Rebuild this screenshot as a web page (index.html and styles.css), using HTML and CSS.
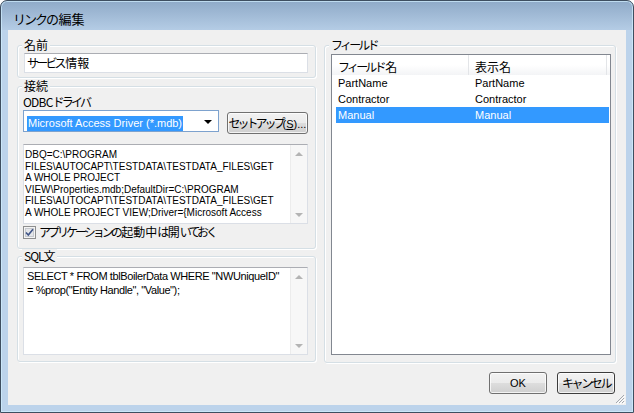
FILE: index.html
```html
<!DOCTYPE html>
<html lang="ja">

<head>
    <meta charset="UTF-8">
    <meta name="viewport" content="width=device-width, initial-scale=1.0">
    <title>リンクの編集</title>
    <link rel="stylesheet" href="styles.css">
</head>

<body>
    <div class="window">
        <div class="titlebar"><span class="kana title-kana">リンクの</span>編集</div>
        <div class="client">
            <div class="columns">
                <div class="col-left">
                    <div class="group group-name">
                        <span class="group-label">名前</span>
                        <div class="textbox name-box"><span class="kana">サービス</span>情報</div>
                    </div>

                    <div class="group group-conn">
                        <span class="group-label">接続</span>
                        <div class="field-label"><span class="abbr">ODBC</span><span class="kana">ドライバ</span></div>
                        <div class="driver-row">
                            <div class="combo">
                                <span class="combo-value latin">Microsoft Access Driver (*.mdb)</span>
                                <span class="combo-arrow"></span>
                            </div>
                            <button class="btn btn-setup"><span class="kana">セットアップ</span><span class="latin">(<u>S</u>)...</span></button>
                        </div>
                        <div class="memo conn-memo">
                            <div class="memo-text conn-text">DBQ=C:\PROGRAM<br>FILES\AUTOCAPT\TESTDATA\TESTDATA_FILES\GET<br>A WHOLE PROJECT<br>VIEW\Properties.mdb;DefaultDir=C:\PROGRAM<br>FILES\AUTOCAPT\TESTDATA\TESTDATA_FILES\GET<br>A WHOLE PROJECT VIEW;Driver={Microsoft Access</div>
                            <div class="vscroll">
                                <span class="arrow arrow-up"></span>
                                <span class="arrow arrow-down"></span>
                            </div>
                        </div>
                        <label class="check-row">
                            <span class="check-box">
                                <svg width="13" height="13" viewBox="0 0 13 13">
                                    <rect x="0.5" y="0.5" width="12" height="12" fill="#f4f4f4" stroke="#8e8f8f"/>
                                    <rect x="2.5" y="2.5" width="8" height="8" fill="#e4e6e9" stroke="#c6c9ce"/>
                                    <path d="M3 6.5 L5.3 9 L10 3.2" fill="none" stroke="#3f5487" stroke-width="1.6"/>
                                </svg>
                            </span>
                            <span class="check-text"><span class="kana">アプリケーションの</span>起動中<span class="kana">は</span>開<span class="kana">いておく</span></span>
                        </label>
                    </div>

                    <div class="group group-sql">
                        <span class="group-label label-sql">SQL文</span>
                        <div class="memo sql-memo">
                            <div class="memo-text sql-text latin">SELECT * FROM tblBoilerData WHERE "NWUniqueID"<br>= %prop("Entity Handle", "Value");</div>
                            <div class="vscroll">
                                <span class="arrow arrow-up"></span>
                                <span class="arrow arrow-down"></span>
                            </div>
                        </div>
                    </div>
                </div>

                <div class="col-right">
                    <div class="group group-fields">
                        <span class="group-label"><span class="kana">フィールド</span></span>
                        <div class="listview">
                            <div class="lv-header">
                                <div class="lv-head-cell lv-col1"><span class="kana">フィールド</span>名</div>
                                <div class="lv-head-cell lv-col2">表示名</div>
                            </div>
                            <div class="lv-rows latin">
                                <div class="lv-row">
                                    <span class="lv-cell lv-col1">PartName</span>
                                    <span class="lv-cell">PartName</span>
                                </div>
                                <div class="lv-row">
                                    <span class="lv-cell lv-col1">Contractor</span>
                                    <span class="lv-cell">Contractor</span>
                                </div>
                                <div class="lv-row selected">
                                    <span class="lv-cell lv-col1">Manual</span>
                                    <span class="lv-cell">Manual</span>
                                </div>
                            </div>
                        </div>
                    </div>
                </div>
            </div>

            <div class="footer">
                <button class="btn btn-dialog latin">OK</button>
                <button class="btn btn-dialog btn-default"><span class="kana">キャンセル</span></button>
            </div>

            <svg class="grip" width="11" height="11" viewBox="0 0 11 11">
                <path d="M10 2 L2 10 M10 5 L5 10 M10 8 L8 10" stroke="#a3a7ad" stroke-width="1"/>
                <path d="M11 3 L3 11 M11 6 L6 11 M11 9 L9 11" stroke="#ffffff" stroke-width="1"/>
            </svg>
        </div>
    </div>
</body>

</html>
```

FILE: styles.css
```css
body {
    margin: 0;
    padding: 0;
    font-family: "Noto Sans CJK JP", "Liberation Sans", sans-serif;
    font-size: 12px;
    color: #000;
    background-color: #ffffff;
}

/* the dialog font sets kana narrow, so kana runs are tightened */
.kana {
    letter-spacing: -2.8px;
    margin-right: 1.5px;
}

.latin {
    font-family: "Liberation Sans", sans-serif;
    font-size: 11px;
    letter-spacing: 0;
}

.window {
    width: 634px;
    height: 413px;
    box-sizing: border-box;
    border: 1px solid #3e4e60;
    border-radius: 7px 7px 0 0;
    background: linear-gradient(#8faac8 0, #b4cce5 29px, #bcd3eb 29px, #bcd3eb 100%);
    box-shadow: inset 0 0 0 1px rgba(210, 240, 255, 0.7);
    display: flex;
    flex-direction: column;
}

.titlebar {
    height: 29px;
    box-sizing: border-box;
    padding: 10px 0 0 12px;
    line-height: 16px;
    font-size: 13px;
    color: #000;
}

.title-kana {
    letter-spacing: -2px;
}

.client {
    flex: 1;
    margin: 0 7px 7px;
    background-color: #f0f0f0;
    display: flex;
    flex-direction: column;
    position: relative;
}

.columns {
    display: flex;
    gap: 8px;
    padding: 15px 10px 0 9px;
}

.col-left {
    width: 299px;
    display: flex;
    flex-direction: column;
}

.col-right {
    width: 292px;
}

/* group boxes */
.group {
    position: relative;
    box-sizing: border-box;
    border: 1px solid #d5dfe5;
    border-radius: 3px;
    box-shadow: inset 1px 1px 0 #fff, 1px 1px 0 #fff;
    padding-left: 5px;
}

.group-label {
    position: absolute;
    top: -8px;
    left: 4px;
    padding: 0 2px;
    line-height: 14px;
    background-color: #f0f0f0;
}

.label-sql {
    letter-spacing: -1px;
}

.group-name {
    height: 33px;
    padding-top: 7px;
}

.group-conn {
    height: 163px;
    margin-top: 8px;
}

.group-sql {
    height: 106px;
    margin-top: 7px;
    padding-top: 10px;
}

.group-fields {
    height: 318px;
    padding: 8px 4px 7px 6px;
    display: flex;
}

/* text inputs */
.textbox {
    box-sizing: border-box;
    height: 20px;
    background-color: #fff;
    border: 1px solid #dbdfe6;
    border-top-color: #abadb3;
    line-height: 18px;
    padding-left: 2px;
}

.name-box {
    width: 284px;
    margin-left: 1px;
}

.field-label {
    margin-top: 8px;
    line-height: 14px;
}

.abbr {
    letter-spacing: -0.8px;
}

.driver-row {
    display: flex;
    margin-top: 1px;
}

.combo {
    box-sizing: border-box;
    width: 196px;
    height: 22px;
    border: 1px solid #7da2ce;
    background-color: #fff;
    position: relative;
    padding: 2px 0 0 3px;
}

.combo-value {
    display: inline-block;
    height: 15px;
    line-height: 15px;
    padding: 0 1px;
    background-color: #3399ff;
    color: #fff;
}

.combo-arrow {
    position: absolute;
    top: 9px;
    right: 6px;
    border-left: 4px solid transparent;
    border-right: 4px solid transparent;
    border-top: 4px solid #000;
}

/* buttons */
.btn {
    box-sizing: border-box;
    height: 22px;
    border: 1px solid #707070;
    border-radius: 3px;
    background: linear-gradient(#f2f2f2 0%, #ebebeb 50%, #dddddd 51%, #cfcfcf 100%);
    box-shadow: inset 0 0 0 1px rgba(255, 255, 255, 0.75);
    font-family: inherit;
    font-size: 12px;
    color: #000;
    padding: 0;
    line-height: 18px;
    white-space: nowrap;
}

.btn.latin {
    font-family: "Liberation Sans", sans-serif;
    font-size: 11px;
}

.btn-setup {
    width: 81px;
    margin: 2px 0 0 8px;
}

.btn-setup .kana {
    letter-spacing: -3px;
    margin-right: 0;
}

.btn-dialog {
    width: 58px;
}

.btn-default {
    border-color: #3c3c3c;
}

.btn-default .kana {
    letter-spacing: -2.4px;
    margin-right: 0;
}

/* multi-line boxes */
.memo {
    box-sizing: border-box;
    width: 285px;
    display: flex;
    background-color: #fff;
    border: 1px solid #dbdfe6;
    border-top-color: #abadb3;
}

.memo-text {
    flex: 1;
    overflow: hidden;
    white-space: nowrap;
}

.conn-memo {
    height: 80px;
    margin-top: 10px;
}

.conn-text {
    padding: 4px 0 0 1px;
    font-family: "Liberation Sans", sans-serif;
    font-size: 10px;
    line-height: 11.6px;
}

.sql-memo {
    height: 88px;
}

.sql-text {
    padding: 1px 0 0 3px;
    line-height: 14px;
    letter-spacing: -0.4px;
}

.vscroll {
    width: 17px;
    flex-shrink: 0;
    background-color: #f7f7f7;
    border-left: 1px solid #ececec;
    display: flex;
    flex-direction: column;
    justify-content: space-between;
    align-items: center;
    padding: 7px 0 6px;
    box-sizing: border-box;
}

.arrow {
    width: 0;
    height: 0;
    border-left: 4px solid transparent;
    border-right: 4px solid transparent;
}

.arrow-up {
    border-bottom: 4px solid #b4b4b4;
}

.arrow-down {
    border-top: 4px solid #b4b4b4;
}

.check-row {
    display: flex;
    align-items: center;
    gap: 3px;
    height: 14px;
    margin-top: 1px;
    line-height: 14px;
}

.check-box {
    display: flex;
}

.check-text .kana {
    letter-spacing: -3px;
}

/* list view */
.listview {
    flex: 1;
    box-sizing: border-box;
    border: 1px solid #828790;
    background-color: #fff;
}

.lv-header {
    display: flex;
    height: 20px;
    background: linear-gradient(#ffffff 0%, #ffffff 50%, #f3f4f6 100%);
}

.lv-head-cell {
    box-sizing: border-box;
    padding: 4px 0 0 6px;
    line-height: 15px;
}

.lv-header .lv-col1 {
    width: 137px;
    border-right: 1px solid #e3e5e8;
}

.lv-header .lv-col2 {
    width: 138px;
    border-right: 1px solid #e3e5e8;
}

.lv-rows {
    padding-left: 4px;
    margin-right: 1px;
}

.lv-row {
    display: flex;
    height: 16px;
    line-height: 16px;
    padding-left: 2px;
}

.lv-row .lv-col1 {
    width: 137px;
}

.lv-row.selected {
    background-color: #3399ff;
    color: #fff;
}

.footer {
    margin-top: auto;
    display: flex;
    justify-content: flex-end;
    gap: 10px;
    padding: 0 11px 11px 0;
}

.grip {
    position: absolute;
    right: 1px;
    bottom: 1px;
}
```
